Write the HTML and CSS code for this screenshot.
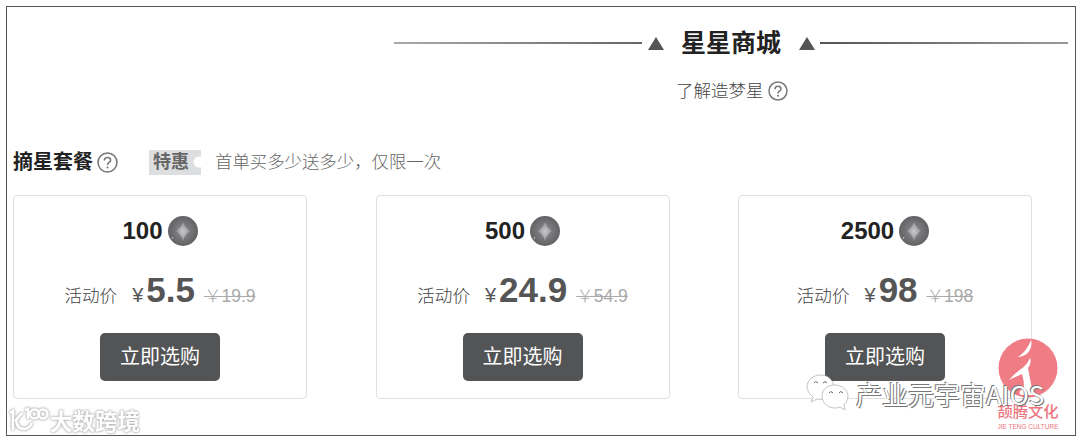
FILE: index.html
```
<!DOCTYPE html>
<html lang="zh-CN">
<head>
  <meta charset="UTF-8">
  <meta name="viewport" content="width=device-width, initial-scale=1.0">
  <title>星星商城</title>
  <link rel="stylesheet" href="styles.css">
</head>
<body>

<svg width="0" height="0" class="defs">
  <defs>
    <radialGradient id="coinBg">
      <stop offset="0" stop-color="#949497"/>
      <stop offset="0.5" stop-color="#77777a"/>
      <stop offset="1" stop-color="#626265"/>
    </radialGradient>
    <radialGradient id="coinStar">
      <stop offset="0" stop-color="#c9c9cc"/>
      <stop offset="1" stop-color="#919194"/>
    </radialGradient>
    <symbol id="coin" viewBox="0 0 30 30">
      <circle cx="15" cy="15" r="15" fill="url(#coinBg)"/>
      <path d="M15 6Q17 12 22 15Q17 18 15 25Q13 18 8 15Q13 12 15 6Z" fill="url(#coinStar)"/>
      <circle cx="4.5" cy="22" r="0.8" fill="#ccc"/>
    </symbol>
    <symbol id="help" viewBox="0 0 20 20">
      <circle cx="10" cy="10" r="9" fill="none" stroke="currentColor" stroke-width="1.5"/>
      <path d="M7 8.2Q7 5.2 10 5.2T13 7.9C13 10 10 9.900 10 12.400" fill="none" stroke="currentColor" stroke-width="1.5"/>
      <circle cx="10" cy="14.7" r="1" fill="currentColor"/>
    </symbol>
  </defs>
</svg>

<div class="frame">
  <header class="shop-head">
    <i class="line line-left"></i>
    <i class="triangle"></i>
    <h1>星星商城</h1>
    <i class="triangle"></i>
    <i class="line line-right"></i>
  </header>
  <div class="about">了解造梦星<svg class="help"><use href="#help"/></svg></div>

  <div class="section-head">
    <h2>摘星套餐</h2>
    <svg class="help"><use href="#help"/></svg>
    <span class="tag">特惠</span>
    <span class="tip">首单买多少送多少，仅限一次</span>
  </div>

  <div class="cards">
    <div class="card">
      <div class="amount">100<svg class="coin"><use href="#coin"/></svg></div>
      <div class="price"><span class="label">活动价</span><span class="yen">¥</span><b>5.5</b><del>￥19.9</del></div>
      <button class="buy">立即选购</button>
    </div>
    <div class="card">
      <div class="amount">500<svg class="coin"><use href="#coin"/></svg></div>
      <div class="price"><span class="label">活动价</span><span class="yen">¥</span><b>24.9</b><del>￥54.9</del></div>
      <button class="buy">立即选购</button>
    </div>
    <div class="card">
      <div class="amount">2500<svg class="coin"><use href="#coin"/></svg></div>
      <div class="price"><span class="label">活动价</span><span class="yen">¥</span><b>98</b><del>￥198</del></div>
      <button class="buy">立即选购</button>
    </div>
  </div>
</div>

<!-- watermarks -->
<div class="mark-left">
  <svg width="42" height="28" viewBox="0 0 42 28">
    <g fill="none" stroke="#fff" stroke-width="2.6">
      <path d="M2 7L5 5V24M14 7L8 14Q9 23 16 23Q21 23 24 17"/>
      <path d="M17 4L20 3V13"/>
      <circle cx="26.5" cy="8" r="4.5"/>
      <circle cx="35" cy="8" r="4.5"/>
    </g>
  </svg>
  <span>大数跨境</span>
</div>

<div class="brand">
  <svg width="60" height="60" viewBox="0 0 60 60">
    <circle cx="30" cy="30" r="29.5" fill="#f07c85"/>
    <path d="M33 2C35 8 31 15 27 17Q23 19 20 19Q29 13 33 2Z" fill="#fff"/>
    <path d="M32 20Q34 25 30 30L33 46Q34 52 37 57H23Q19 54 26 50Q26 42 24 36L11 42Q16 36 23 31Q29 27 32 20Z" fill="#fff"/>
  </svg>
  <div class="brand-name">颉腾文化</div>
  <div class="brand-en">JIE TENG CULTURE</div>
</div>

<div class="mark-right">
  <svg width="44" height="38" viewBox="0 0 44 38">
    <g fill="#fff" stroke="#aaa" stroke-width="0.7">
      <path d="M15 1C7 1 1 6 1 13Q1 19 7 23L5 28L11 25Q22 27 27 20Q30 14 26 7Q22 1 15 1Z"/>
      <path d="M29 11C21 11 16 16 16 22S21 34 29 34Q32 34 34 33L39 36L38 31Q42 27 42 22C42 16 36 11 29 11Z"/>
    </g>
    <g fill="none" stroke="#666" stroke-width="1">
      <path d="M8 9Q9.5 6 12 9M17 9Q19 6 21 9M23 19Q24.5 16 27 19M33 19Q34.5 16 37 19"/>
    </g>
  </svg>
  <span>产业元宇宙AIOS</span>
</div>

</body>
</html>
```

FILE: styles.css
```
* {
  box-sizing: border-box;
}

body {
  margin: 0;
  padding: 6px;
  height: 442px;
  overflow: hidden;
  position: relative;
  background: #fff;
  font-family: "Liberation Sans", "Noto Sans CJK SC", sans-serif;
  color: #222;
}

.defs {
  position: absolute;
}

.frame {
  width: 1070px;
  height: 430px;
  border: 1px solid #555;
}

h1, h2 {
  margin: 0;
}

.shop-head {
  display: flex;
  align-items: center;
  height: 36px;
  margin-top: 18px;
  padding-left: 387px;
}

.shop-head h1 {
  font-size: 25px;
  line-height: 36px;
  margin: 0 18px 0 17px;
}

.line {
  width: 248px;
  height: 2px;
}

.line-left {
  margin-right: 6px;
  background: linear-gradient(to right, #aaa, #666);
}

.line-right {
  margin-left: 5px;
  background: linear-gradient(to right, #555, #999);
}

.triangle {
  border: 8px solid transparent;
  border-top: 0;
  border-bottom: 13px solid #555;
}

.about {
  display: flex;
  align-items: center;
  height: 26px;
  margin-top: 15px;
  padding-left: 669px;
  font-size: 17.5px;
  font-weight: 300;
  color: #444;
}

.help {
  width: 20px;
  height: 20px;
  color: #777;
}

.about .help {
  margin: 3px 0 0 4px;
}

.section-head {
  display: flex;
  align-items: center;
  height: 30px;
  margin-top: 45px;
  padding-left: 6px;
}

.section-head h2 {
  font-size: 20px;
  line-height: 30px;
}

.section-head .help {
  width: 21px;
  height: 21px;
  margin-left: 4px;
}

.tag {
  width: 52px;
  height: 25px;
  margin-left: 31px;
  padding-left: 4px;
  background: radial-gradient(circle at 50px 12px, #fff 5px, #dcdedf 6px);
  font-size: 18px;
  font-weight: bold;
  line-height: 24px;
  color: #666;
}

.tip {
  margin: -3px 0 0 14px;
  font-size: 17.4px;
  font-weight: 300;
  color: #666;
}

.cards {
  display: grid;
  grid-template-columns: repeat(3, 294px);
  column-gap: 68.5px;
  margin-top: 18px;
  padding-left: 6px;
}

.card {
  display: flex;
  flex-direction: column;
  align-items: center;
  height: 204px;
  border: 1px solid #e0e0e0;
  border-radius: 4px;
}

.amount {
  display: flex;
  align-items: center;
  height: 30px;
  margin-top: 20px;
  font-size: 24px;
  font-weight: bold;
}

.coin {
  width: 30px;
  height: 30px;
  margin-left: 5px;
}

.price {
  display: flex;
  align-items: baseline;
  height: 40px;
  margin-top: 24px;
  line-height: 40px;
  color: #555;
  white-space: nowrap;
}

.label {
  font-size: 17.6px;
  font-weight: 300;
  color: #444;
}

.yen {
  margin-left: 15px;
  font-size: 20px;
}

.price b {
  margin-left: 3px;
  font-size: 35px;
}

.price del {
  margin-left: 9px;
  font-size: 17.5px;
  font-weight: 300;
  color: #aaa;
}

.buy {
  width: 120px;
  height: 48px;
  margin-top: 23px;
  padding: 0 0 4px;
  border: none;
  border-radius: 5px;
  background: #525456;
  color: #fff;
  font-family: inherit;
  font-size: 20px;
}

.mark-left {
  position: absolute;
  left: 8px;
  top: 406px;
  display: flex;
  color: #fff;
  font-size: 22.5px;
  font-weight: bold;
  line-height: 34px;
  filter: drop-shadow(0 0 1px #aaa) drop-shadow(0 0 1px #ccc);
}

.mark-right {
  position: absolute;
  left: 806px;
  top: 374px;
  display: flex;
  color: #fff;
  font-family: "Noto Sans CJK SC", sans-serif;
  font-size: 26px;
  line-height: 40px;
  white-space: nowrap;
}

.mark-right span {
  margin-left: 6px;
  text-shadow: -1px -1px 0 #777, 1px 1px 0 #777;
}

.brand {
  position: absolute;
  left: 996px;
  top: 338px;
  width: 64px;
  text-align: center;
  color: #ed7580;
}

.brand svg {
  display: block;
  margin-left: 2px;
}

.brand-name {
  font-size: 15.3px;
  font-weight: 500;
  line-height: 28px;
  white-space: nowrap;
}

.brand-en {
  font-size: 6.5px;
  line-height: 2px;
  white-space: nowrap;
}
```
